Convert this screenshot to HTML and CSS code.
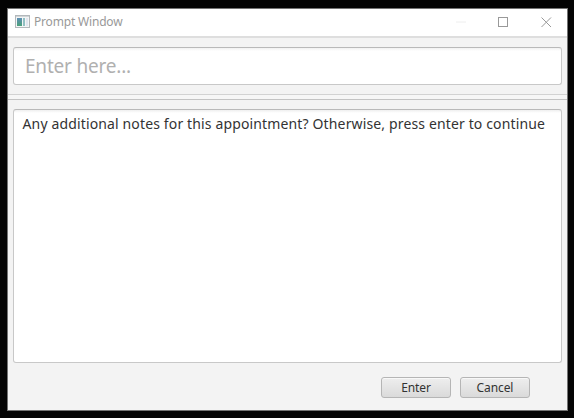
FILE: index.html
```html
<!DOCTYPE html>
<html lang="en">
<head>
<meta charset="utf-8">
<title>Prompt Window</title>
<link rel="stylesheet" href="styles.css">
</head>
<body>
<main class="window">
  <header class="titlebar">
    <svg class="app-icon" width="15" height="13" viewBox="0 0 15 13">
      <defs><linearGradient id="pane" x1="0" y1="0" x2="0" y2="1"><stop offset="0" stop-color="#5f8eb5"/><stop offset="1" stop-color="#4aa179"/></linearGradient></defs>
      <rect x=".5" y=".5" width="14" height="12" fill="#f3f5f5" stroke="#b3b8bb"/>
      <path d="M1 1.5h13" stroke="#d0d4d6"/>
      <rect x="2" y="3" width="5" height="8" fill="url(#pane)"/>
      <rect x="8" y="3" width="2" height="8" fill="#91c0c3"/>
      <rect x="11" y="3" width="2" height="8" fill="#e0e4ee"/>
    </svg>
    <h1 class="title">Prompt Window</h1>
    <svg class="controls" width="96" height="12" viewBox="0 0 96 12" fill="none">
      <path d="M0 6h10" stroke="#eee"/>
      <rect x="42.5" y="1.5" width="9" height="9" stroke="#999"/>
      <path d="M85.5 1.5l9.5 9.5M95 1.5L85.500 11" stroke="#999"/>
    </svg>
  </header>
  <div class="field"><span class="placeholder">Enter here...</span></div>
  <div class="divider"></div>
  <section class="notes"><span class="message">Any additional notes for this appointment? Otherwise, press enter to continue</span></section>
  <footer class="actions">
    <button class="button">Enter</button>
    <button class="button">Cancel</button>
  </footer>
</main>
</body>
</html>
```
FILE: styles.css
```css
* { box-sizing: border-box; }
body {
  margin: 0;
  width: 574px;
  height: 418px;
  padding: 8px 6px 7px 7px;
  background: #040404;
  font-family: "Noto Sans", "Open Sans", sans-serif;
  overflow: hidden;
}
.window {
  display: flex;
  flex-direction: column;
  width: 561px;
  height: 403px;
  border: 1px solid #747474;
  background: #f3f3f3;
}
.titlebar {
  display: flex;
  align-items: center;
  height: 29px;
  flex: none;
  padding: 0 15px 2px 7px;
  background: #fff;
  border-bottom: 2px solid #dedede;
}
.app-icon { display: block; }
.title {
  margin: 1px auto 0 4px;
  font-size: 12px;
  line-height: 18px;
  letter-spacing: -0.18px;
  font-weight: 400;
  color: #999;
  white-space: nowrap;
}
.controls { display: block; }
.field {
  flex: none;
  height: 38px;
  margin: 9px 5px 0;
  padding-left: 11px;
  border: 1px solid #c8c8c8;
  border-top-color: #b9b9b9;
  border-radius: 3px;
  background: linear-gradient(#f1f1f1, #fff 3px);
  color: #b0b0b0;
  font-size: 19px;
  line-height: 36px;
  letter-spacing: -0.2px;
}
.divider {
  flex: none;
  height: 6px;
  margin-top: 9px;
  border-top: 1px solid #d2d2d2;
  border-bottom: 1px solid #c3c3c3;
  background: #f6f6f6;
}
.notes {
  flex: none;
  height: 254px;
  margin: 9px 5px 0;
  padding-left: 8.500px;
  border: 1px solid #c8c8c8;
  border-top-color: #b9b9b9;
  border-radius: 3px;
  background: linear-gradient(#efefef, #fff 3px);
  color: #333;
  font-size: 14px;
  line-height: 28px;
  letter-spacing: 0.14px;
  white-space: nowrap;
}
.actions {
  display: flex;
  justify-content: flex-end;
  gap: 9px;
  padding: 14px 37px 0 0;
}
.button {
  width: 70px;
  height: 21px;
  padding: 0;
  border: 1px solid #b5b5b5;
  border-radius: 3px;
  background: linear-gradient(#eee, #dadada);
  box-shadow: inset 0 1px #f8f8f8;
  color: #333;
  font: 12px/19px "Noto Sans", sans-serif;
  letter-spacing: -0.1px;
}
```
